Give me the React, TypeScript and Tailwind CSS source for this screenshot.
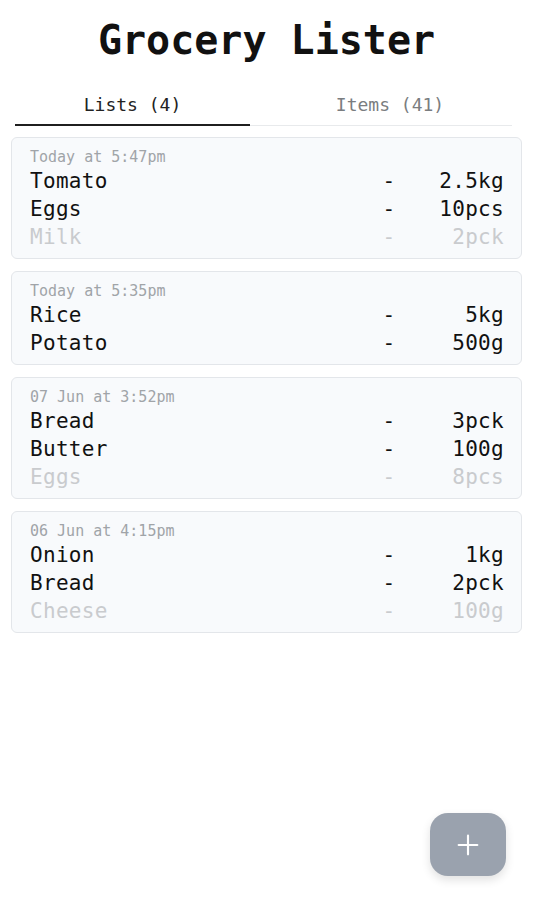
import React from 'react';
import { Plus } from 'lucide-react';

type Item = { name: string; qty: string };
type GroceryList = { id: number; date: string; items: Item[] };

const lists: GroceryList[] = [
  {
    id: 1,
    date: 'Today at 5:47pm',
    items: [
      { name: 'Tomato', qty: '2.5kg' },
      { name: 'Eggs', qty: '10pcs' },
      { name: 'Milk', qty: '2pck' },
    ],
  },
  {
    id: 2,
    date: 'Today at 5:35pm',
    items: [
      { name: 'Rice', qty: '5kg' },
      { name: 'Potato', qty: '500g' },
    ],
  },
  {
    id: 3,
    date: '07 Jun at 3:52pm',
    items: [
      { name: 'Bread', qty: '3pck' },
      { name: 'Butter', qty: '100g' },
      { name: 'Eggs', qty: '8pcs' },
    ],
  },
  {
    id: 4,
    date: '06 Jun at 4:15pm',
    items: [
      { name: 'Onion', qty: '1kg' },
      { name: 'Bread', qty: '2pck' },
      { name: 'Cheese', qty: '100g' },
    ],
  },
];

const mono = "font-['DejaVu_Sans_Mono','Liberation_Mono',monospace]";

function ListCard({ list }: { list: GroceryList }): React.ReactElement {
  return (
    <div className="rounded-md border border-[#e3e6ea] bg-[#f8fafc] pl-[18px] pr-[17px] pt-[9px] pb-[6px]">
      <p className="text-[15px] leading-[21px] text-[#a0a4a8]">{list.date}</p>
      {list.items.map((item, i) => (
        <div
          key={i}
          className={[
            'flex items-center h-7 text-[21px] tracking-[0.3px]',
            i === 2 ? 'text-[#c9cbce]' : 'text-[#111]',
          ].join(' ')}
        >
          <span className="flex-1">{item.name}</span>
          <span className="w-[26px] text-center">-</span>
          <span className="w-[102px] text-right">{item.qty}</span>
        </div>
      ))}
    </div>
  );
}

export default function App(): React.ReactElement {
  return (
    <div className={`relative min-h-[900px] w-full bg-white ${mono}`}>
      <h1 className="pt-[16px] text-center text-[40px] leading-[48px] font-bold text-[#111]">
        Grocery Lister
      </h1>

      {/* Tabs */}
      <div className="mx-[15px] mr-[21px] mt-[29px] flex border-b border-[#e8eaec]">
        <div className="w-[235px] border-b-2 border-[#1f1f1f] pb-[7px] -mb-px text-center text-[18px] leading-6 text-[#222]">
          Lists (4)
        </div>
        <div className="flex-1 pl-[18px] pb-[7px] text-center text-[18px] leading-6 text-[#7a7d80]">
          Items (41)
        </div>
      </div>

      {/* Lists */}
      <div className="mx-[11px] mt-[11px] flex flex-col gap-3">
        {lists.map((list) => (
          <ListCard key={list.id} list={list} />
        ))}
      </div>

      {/* FAB */}
      <button
        type="button"
        className="absolute left-[430px] top-[813px] flex h-[63px] w-[76px] items-center justify-center rounded-[18px] bg-[#9aa2ae] shadow-[0_4px_10px_rgba(0,0,0,0.12)]"
        aria-label="Add list"
      >
        <Plus size={32} strokeWidth={1.6} className="text-white" />
      </button>
    </div>
  );
}
